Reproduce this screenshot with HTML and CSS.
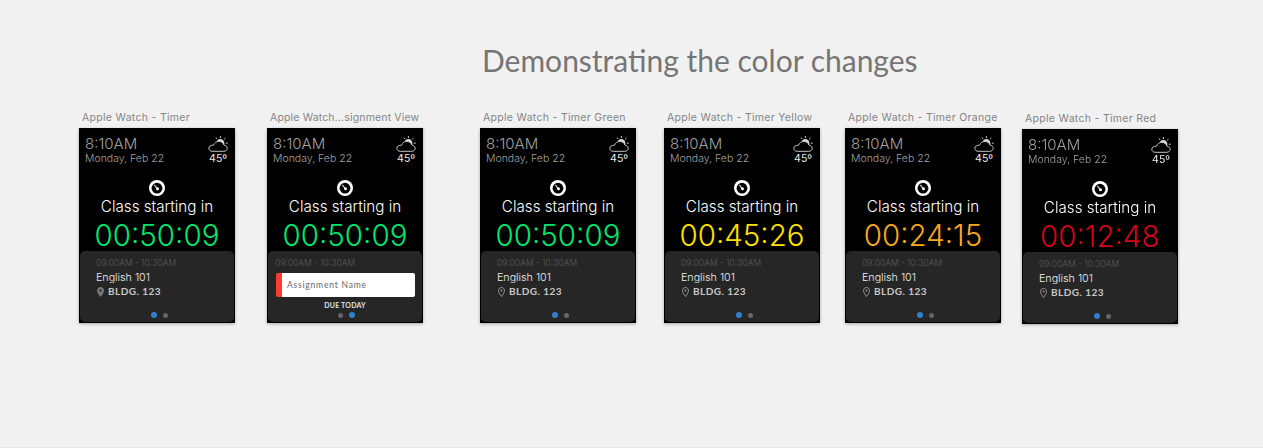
FILE: index.html
```html
<!DOCTYPE html>
<html lang="en">
<head>
  <meta charset="UTF-8" />
  <title>Demonstrating the color changes</title>
  <link rel="stylesheet" href="styles.css">
</head>
<body>

  <svg class="defs" width="0" height="0">
    <symbol id="weather" viewBox="0 0 20 16">
      <path d="M4.200 15.300h11.600c1.900 0 3.400-1.300 3.400-3 0-1.600-1.300-2.900-3-3-.7-2.300-2.800-3.900-5.300-3.900-2.500 0-4.600 1.500-5.300 3.700C2.500 9.300.8 10.400.8 12.200c0 1.800 1.500 3.100 3.400 3.100z" fill="none" stroke="#c4c4c4" stroke-width="1"/>
      <path d="M8.800 5.200C9.500 3.900 10.800 3.100 12.300 3.100c2.300 0 4.100 1.800 4.100 4.100 0 .8-.2 1.400-.5 1.900C15.300 7.100 13.300 5.400 10.900 5.300z" fill="#d8d8d8"/>
      <path d="M12.400 0v2M17.500 2l-1.400 1.400M19.800 7.200h-2M8 1.500l1 1.500" stroke="#d8d8d8" stroke-width=".9" fill="none"/>
    </symbol>
    <symbol id="stopwatch" viewBox="0 0 16 16">
      <circle cx="8" cy="8" r="8" fill="#fff"/>
      <circle cx="8" cy="8.200" r="5.400" fill="#000"/>
      <path d="M5.400 4.900L8.400 8.800" stroke="#ddd" stroke-width="1.100"/>
      <circle cx="8.500" cy="8.800" r="1.500" fill="#fff"/>
    </symbol>
    <symbol id="pin" viewBox="0 0 7 10">
      <path d="M3.500.5C1.800.5.500 1.800.500 3.500c0 2.200 3 6 3 6s3-3.800 3-6C6.500 1.800 5.200.5 3.500.5z" fill="none" stroke="#9a9a9a" stroke-width="1"/>
      <circle cx="3.500" cy="3.500" r=".9" fill="#9a9a9a"/>
    </symbol>
    <symbol id="pin-solid" viewBox="0 0 7 10">
      <path d="M3.500 0C1.600 0 0 1.600 0 3.500c0 2.500 3.500 6.500 3.500 6.500S7 6 7 3.500C7 1.600 5.400 0 3.500 0z" fill="#777"/>
      <circle cx="3.500" cy="3.500" r="1.200" fill="#333"/>
    </symbol>
  </svg>

  <h1 class="title">Demonstrating the color changes</h1>

  <div class="canvas">

    <div class="board">
      <div class="board-label">Apple Watch - Timer</div>
      <div class="watch">
        <div class="top">
          <div><div class="clock">8:10AM</div><div class="date">Monday, Feb 22</div></div>
          <div class="weather"><svg class="cloud"><use href="#weather"/></svg><div class="temp">45º</div></div>
        </div>
        <svg class="stopwatch"><use href="#stopwatch"/></svg>
        <div class="starting">Class starting in</div>
        <div class="timer green">00:50:09</div>
        <div class="panel">
          <div class="hours">09:00AM - 10:30AM</div>
          <div class="course">English 101</div>
          <div class="room"><svg class="pin"><use href="#pin-solid"/></svg>BLDG. 123</div>
          <div class="dots"><span class="dot on"></span><span class="dot"></span></div>
        </div>
      </div>
    </div>

    <div class="board b2">
      <div class="board-label">Apple Watch...signment View</div>
      <div class="watch">
        <div class="top">
          <div><div class="clock">8:10AM</div><div class="date">Monday, Feb 22</div></div>
          <div class="weather"><svg class="cloud"><use href="#weather"/></svg><div class="temp">45º</div></div>
        </div>
        <svg class="stopwatch"><use href="#stopwatch"/></svg>
        <div class="starting">Class starting in</div>
        <div class="timer green">00:50:09</div>
        <div class="panel">
          <div class="hours hours-alt">09:00AM - 10:30AM</div>
          <div class="assignment">Assignment Name</div>
          <div class="due">DUE TODAY</div>
          <div class="dots dots-alt"><span class="dot"></span><span class="dot on"></span></div>
        </div>
      </div>
    </div>

    <div class="board b3">
      <div class="board-label">Apple Watch - Timer Green</div>
      <div class="watch">
        <div class="top">
          <div><div class="clock">8:10AM</div><div class="date">Monday, Feb 22</div></div>
          <div class="weather"><svg class="cloud"><use href="#weather"/></svg><div class="temp">45º</div></div>
        </div>
        <svg class="stopwatch"><use href="#stopwatch"/></svg>
        <div class="starting">Class starting in</div>
        <div class="timer green">00:50:09</div>
        <div class="panel">
          <div class="hours">09:00AM - 10:30AM</div>
          <div class="course">English 101</div>
          <div class="room"><svg class="pin"><use href="#pin"/></svg>BLDG. 123</div>
          <div class="dots"><span class="dot on"></span><span class="dot"></span></div>
        </div>
      </div>
    </div>

    <div class="board b4">
      <div class="board-label">Apple Watch - Timer Yellow</div>
      <div class="watch">
        <div class="top">
          <div><div class="clock">8:10AM</div><div class="date">Monday, Feb 22</div></div>
          <div class="weather"><svg class="cloud"><use href="#weather"/></svg><div class="temp">45º</div></div>
        </div>
        <svg class="stopwatch"><use href="#stopwatch"/></svg>
        <div class="starting">Class starting in</div>
        <div class="timer yellow">00:45:26</div>
        <div class="panel">
          <div class="hours">09:00AM - 10:30AM</div>
          <div class="course">English 101</div>
          <div class="room"><svg class="pin"><use href="#pin"/></svg>BLDG. 123</div>
          <div class="dots"><span class="dot on"></span><span class="dot"></span></div>
        </div>
      </div>
    </div>

    <div class="board b5">
      <div class="board-label">Apple Watch - Timer Orange</div>
      <div class="watch">
        <div class="top">
          <div><div class="clock">8:10AM</div><div class="date">Monday, Feb 22</div></div>
          <div class="weather"><svg class="cloud"><use href="#weather"/></svg><div class="temp">45º</div></div>
        </div>
        <svg class="stopwatch"><use href="#stopwatch"/></svg>
        <div class="starting">Class starting in</div>
        <div class="timer orange">00:24:15</div>
        <div class="panel">
          <div class="hours">09:00AM - 10:30AM</div>
          <div class="course">English 101</div>
          <div class="room"><svg class="pin"><use href="#pin"/></svg>BLDG. 123</div>
          <div class="dots"><span class="dot on"></span><span class="dot"></span></div>
        </div>
      </div>
    </div>

    <div class="board b6">
      <div class="board-label">Apple Watch - Timer Red</div>
      <div class="watch">
        <div class="top">
          <div><div class="clock">8:10AM</div><div class="date">Monday, Feb 22</div></div>
          <div class="weather"><svg class="cloud"><use href="#weather"/></svg><div class="temp">45º</div></div>
        </div>
        <svg class="stopwatch"><use href="#stopwatch"/></svg>
        <div class="starting">Class starting in</div>
        <div class="timer red">00:12:48</div>
        <div class="panel">
          <div class="hours">09:00AM - 10:30AM</div>
          <div class="course">English 101</div>
          <div class="room"><svg class="pin"><use href="#pin"/></svg>BLDG. 123</div>
          <div class="dots"><span class="dot on"></span><span class="dot"></span></div>
        </div>
      </div>
    </div>

  </div>

</body>
</html>
```

FILE: styles.css
```css
html, body {
  height: 448px;
  overflow: hidden;
}

body {
  margin: 0;
  box-sizing: border-box;
  background-color: #f1f1f1;
  border-bottom: 1px solid #e6e6e6;
  font-family: Inter, "Liberation Sans", sans-serif;
}

.defs {
  position: absolute;
}

.title {
  margin: 0;
  padding: 42px 0 0 482px;
  height: 70px;
  font-family: Lato, sans-serif;
  font-size: 30px;
  line-height: 37px;
  font-weight: 400;
  color: #757575;
}

/* artboards */
.canvas {
  display: flex;
  align-items: flex-start;
  padding-left: 79px;
}

.board {
  width: 156px;
  flex: none;
}

.b2 { margin-left: 32px; }
.b3 { margin-left: 57px; }
.b4 { margin-left: 28px; }
.b5 { margin-left: 25px; }
.b6 { margin-left: 21px; margin-top: 1px; }

.board-label {
  height: 16px;
  padding-left: 3px;
  white-space: nowrap;
  font-size: 10.500px;
  line-height: 12px;
  letter-spacing: 0.3px;
  color: #858585;
}

.b2 .board-label {
  margin-right: -20px;
  letter-spacing: 0.16px;
}

.watch {
  width: 156px;
  height: 195px;
  box-sizing: border-box;
  position: relative;
  background-color: #000;
  box-shadow: 0 1px 3px rgba(0, 0, 0, 0.3);
  display: flex;
  flex-direction: column;
  align-items: center;
}

.b6 .watch {
  filter: blur(0.3px);
}

.top {
  align-self: stretch;
  display: flex;
  justify-content: space-between;
  padding: 7px 8px 0 6px;
  height: 45px;
  color: #a0a0a0;
}

.clock {
  font-size: 15px;
  line-height: 17px;
  font-weight: 300;
}

.date {
  margin-top: 1px;
  font-size: 10.500px;
  line-height: 12px;
  font-weight: 300;
}

.weather {
  display: flex;
  flex-direction: column;
  align-items: flex-end;
}

.cloud {
  width: 20px;
  height: 16px;
  margin: 1px -1px 0 0;
}

.temp {
  font-size: 10.500px;
  line-height: 12px;
  color: #eee;
  margin-top: 1px;
}

.stopwatch {
  width: 16px;
  height: 16px;
  flex: none;
  margin-bottom: 1px;
}

.starting {
  font-size: 15.200px;
  line-height: 20px;
  font-weight: 300;
  color: #fff;
}

.timer {
  font-size: 29.500px;
  line-height: 36px;
  font-weight: 300;
}

.green { color: #00e66e; }
.yellow { color: #ffe000; }
.orange { color: #f7a81e; }
.red { color: #dc0018; }

.panel {
  position: absolute;
  left: 1px;
  right: 1px;
  bottom: 1px;
  height: 71px;
  box-sizing: border-box;
  padding: 6px 0 0 16px;
  background-color: #262626;
  border-radius: 5px;
}

.hours {
  font-size: 8.500px;
  line-height: 12px;
  font-weight: 300;
  color: #5a5a5a;
}

.hours-alt {
  margin-left: -9px;
}

.course {
  margin-top: 1px;
  font-size: 10.700px;
  line-height: 15px;
  font-weight: 300;
  color: #f0f0f0;
}

.room {
  display: flex;
  align-items: center;
  font-family: Lato, sans-serif;
  font-weight: 700;
  font-size: 10px;
  line-height: 13px;
  letter-spacing: 0.45px;
  color: #c8c8c8;
}

.pin {
  width: 7px;
  height: 10px;
  margin: 0 4px 0 1px;
}

.assignment {
  width: 139px;
  height: 24px;
  box-sizing: border-box;
  margin: 4px 0 0 -8px;
  padding-left: 5px;
  background-color: #fff;
  border-left: 6px solid #ff3b30;
  border-radius: 2px;
  font-family: Lato, sans-serif;
  font-size: 8.500px;
  line-height: 24px;
  letter-spacing: 0.8px;
  color: #666;
}

.due {
  margin: 3px 0 0 -16px;
  text-align: center;
  font-family: Lato, sans-serif;
  font-weight: 700;
  font-size: 7px;
  line-height: 10px;
  letter-spacing: 0.2px;
  color: #e0e0e0;
}

.dots {
  position: absolute;
  left: 71px;
  top: 61px;
  display: flex;
  align-items: center;
  gap: 6px;
}

.dots-alt {
  left: 70px;
}

.dot {
  width: 5px;
  height: 5px;
  border-radius: 50%;
  background-color: #666;
}

.dot.on {
  width: 6px;
  height: 6px;
  background-color: #2f80d0;
}
```
